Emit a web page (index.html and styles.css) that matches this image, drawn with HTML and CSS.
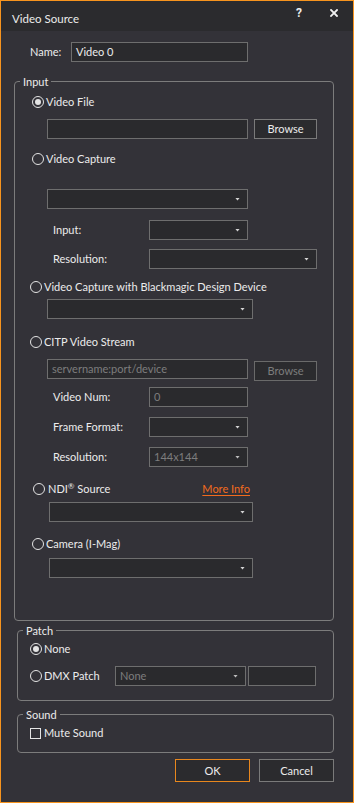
FILE: index.html
```html
<!DOCTYPE html>
<html>
<head>
<meta charset="utf-8">
<link rel="stylesheet" href="styles.css">
</head>
<body>
<div class="window">
  <div class="titlebar">
    <div class="title">Video Source</div>
    <div class="tb-btns">
      <span class="help">?</span>
      <svg class="close" width="8" height="8" viewBox="0 0 8 8"><path d="M1 1 L7 7 M7 1 L1 7" stroke="#f0f0f0" stroke-width="1.8" stroke-linecap="square"/></svg>
    </div>
  </div>
  <div class="content">
    <div class="name-row">
      <span class="name-label">Name:</span>
      <div class="field w176">Video 0</div>
    </div>

    <fieldset class="group input-group">
      <legend>Input</legend>
      <div class="radio-row r-vf"><span class="radio checked"></span><span>Video File</span></div>
      <div class="row r-file"><div class="field w200"></div><div class="btn browse">Browse</div></div>

      <div class="radio-row r-vc"><span class="radio"></span><span>Video Capture</span></div>
      <div class="row r-vcsel"><div class="select w200"><span></span><i class="arr"></i></div></div>
      <div class="row lbl-row r-input"><span class="lbl">Input:</span><div class="select w98"><span></span><i class="arr"></i></div></div>
      <div class="row lbl-row r-res"><span class="lbl">Resolution:</span><div class="select w167"><span></span><i class="arr"></i></div></div>

      <div class="radio-row r-bm"><span class="radio"></span><span>Video Capture with Blackmagic Design Device</span></div>
      <div class="row r-bmsel"><div class="select w205"><span></span><i class="arr"></i></div></div>

      <div class="radio-row r-citp"><span class="radio"></span><span>CITP Video Stream</span></div>
      <div class="row r-server"><div class="field w200 disabled">servername:port/device</div><div class="btn browse disabled b-off">Browse</div></div>
      <div class="row lbl-row r-vnum"><span class="lbl">Video Num:</span><div class="field w98 disabled">0</div></div>
      <div class="row lbl-row r-ff"><span class="lbl">Frame Format:</span><div class="select w98"><span></span><i class="arr"></i></div></div>
      <div class="row lbl-row r-res2"><span class="lbl">Resolution:</span><div class="select w98 disabled"><span>144x144</span><i class="arr"></i></div></div>

      <div class="radio-row r-ndi"><span class="ndi-left"><span class="radio"></span><span>NDI<sup>®</sup> Source</span></span><span class="more">More Info</span></div>
      <div class="row r-ndisel"><div class="select w203"><span></span><i class="arr"></i></div></div>

      <div class="radio-row r-cam"><span class="radio"></span><span>Camera (I-Mag)</span></div>
      <div class="row r-camsel"><div class="select w203"><span></span><i class="arr"></i></div></div>
    </fieldset>

    <fieldset class="group patch-group">
      <legend>Patch</legend>
      <div class="radio-row r-none"><span class="radio checked"></span><span>None</span></div>
      <div class="row r-dmx">
        <span class="dmx-label"><span class="radio"></span><span>DMX Patch</span></span>
        <div class="select w131 disabled"><span>None</span><i class="arr"></i></div>
        <div class="field w68"></div>
      </div>
    </fieldset>

    <fieldset class="group sound-group">
      <legend>Sound</legend>
      <div class="radio-row r-mute"><span class="check"></span><span>Mute Sound</span></div>
    </fieldset>

    <div class="buttons">
      <div class="btn dlg ok">OK</div>
      <div class="btn dlg">Cancel</div>
    </div>
  </div>
</div>
</body>
</html>
```

FILE: styles.css
```css
* { box-sizing: border-box; }
html, body { margin: 0; padding: 0; background: #333238; }
body {
  font-family: Lato, "Liberation Sans", sans-serif;
  font-size: 11px;
  line-height: 14px;
  color: #ececec;
}
.window {
  width: 354px;
  height: 803px;
  border: 1px solid #f7941e;
  background: #333238;
  display: flex;
  flex-direction: column;
}
.titlebar {
  height: 30px;
  background: #2b2b2e;
  display: flex;
  justify-content: space-between;
}
.title { padding: 11px 0 0 11px; font-size: 11.5px; }
.tb-btns {
  display: flex;
  align-items: center;
  height: 24px;
  padding-right: 15px;
}
.help { font-family: Roboto, sans-serif; font-weight: bold; font-size: 12px; margin-right: 28px; }
.close { display: block; }

.content {
  padding: 0 19px 0 13px;
  display: flex;
  flex-direction: column;
}
.name-row {
  display: flex;
  align-items: center;
  margin-top: 11px;
  height: 20px;
}
.name-label { margin-left: 16px; width: 41px; }

.field, .select {
  height: 20px;
  background: #2a2a2d;
  border: 1px solid #6e6e6e;
  display: flex;
  align-items: center;
  padding-left: 4px;
  white-space: nowrap;
}
.select { justify-content: space-between; padding-right: 7px; }
.arr {
  display: block;
  width: 5px;
  height: 3px;
  background: #d4d4d4;
  clip-path: polygon(0 0, 100% 0, 50% 100%);
}
.disabled { color: #7d7d7d; }
.select.disabled .arr { background: #bdbdbd; }

.w68 { width: 68px; }
.w98 { width: 99px; }
.w131 { width: 131px; }
.w167 { width: 168px; }
.w176 { width: 177px; }
.w200 { width: 201px; }
.w203 { width: 204px; }
.w205 { width: 206px; }

.btn {
  height: 20px;
  border: 1px solid #7a7a7a;
  background: #2b2b2e;
  display: flex;
  align-items: center;
  justify-content: center;
}
.browse { width: 63px; margin-left: 6px; }
.b-off { margin-top: 2px; border-color: #6a6a6a; }

.group {
  margin: 0;
  padding: 0;
  border: 1px solid #7c7c7c;
  border-radius: 4px;
  min-width: 0;
}
.group legend {
  padding: 0 3px;
  margin-left: 5px;
  line-height: 15px;
}
.input-group { margin-top: 12px; padding-bottom: 42px; }
.patch-group { margin: 2px 0 0 3px; padding-bottom: 14px; }
.patch-group legend { margin-left: 5px; }
.sound-group { margin: 6px 0 0 3px; padding-bottom: 12px; }
.sound-group legend { margin-left: 5px; }

.row { display: flex; align-items: flex-start; height: 20px; }
.radio-row { display: flex; align-items: center; height: 14px; }
.radio {
  width: 12px;
  height: 12px;
  border: 1px solid #e4e4e4;
  border-radius: 50%;
  margin-right: 2px;
  display: flex;
  align-items: center;
  justify-content: center;
  flex: none;
}
.radio.checked::after {
  content: "";
  width: 6px;
  height: 6px;
  border-radius: 50%;
  background: #e4e4e4;
}
.check {
  width: 11px;
  height: 11px;
  border: 1px solid #e4e4e4;
  margin-right: 3px;
  flex: none;
}
.lbl { width: 96px; margin-left: 38px; line-height: 20px; }
sup { font-size: 8px; line-height: 0; vertical-align: 4px; }

/* input group rows */
.r-vf { margin: 6px 0 0 17px; }
.r-file { margin: 10px 0 0 32px; }
.r-vc { margin: 13px 0 0 17px; }
.r-vcsel { margin: 23px 0 0 32px; }
.r-input { margin-top: 11px; }
.r-res { margin-top: 9px; }
.r-bm { margin: 11px 0 0 15px; }
.r-bmsel { margin: 5px 0 0 32px; }
.r-citp { margin: 16px 0 0 15px; }
.r-server { margin: 10px 0 0 32px; height: 22px; }
.r-vnum { margin-top: 6px; }
.r-ff { margin-top: 10px; }
.r-res2 { margin-top: 10px; }
.r-ndi { margin: 15px 0 0 18px; width: 217px; justify-content: space-between; }
.ndi-left { display: flex; align-items: center; }
.ndi-left .radio { margin-right: 3px; }
.more { color: #f26b1d; text-decoration: underline; text-underline-offset: 2px; }
.r-ndisel { margin: 6px 0 0 34px; }
.r-cam { margin: 15px 0 0 17px; }
.r-camsel { margin: 7px 0 0 34px; }

/* patch */
.r-none { margin: 4px 0 0 12px; }
.r-dmx { margin: 10px 0 0 12px; align-items: center; }
.dmx-label { display: flex; align-items: center; width: 85px; }
.r-dmx .field { margin-left: 2px; }

/* sound */
.r-mute { margin: 4px 0 0 12px; }

.buttons {
  display: flex;
  justify-content: flex-end;
  gap: 9px;
  margin-top: 6px;
}
.dlg { width: 75px; height: 23px; }
.ok { border-color: #e8871e; }
```
